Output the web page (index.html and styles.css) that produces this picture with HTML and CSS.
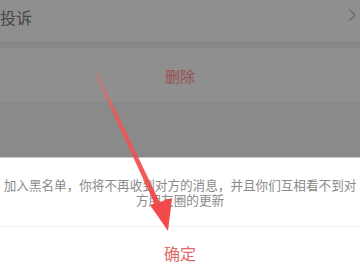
FILE: index.html
```html
<!DOCTYPE html>
<html lang="zh">
<head>
<meta charset="utf-8">
<link rel="stylesheet" href="styles.css">
</head>
<body>
<div class="page">
  <div class="row row-complaint">
    <span class="label">投诉</span>
    <svg class="chev" width="8" height="14" viewBox="0 0 8 14"><path d="M1 1 L7 7 L1 13" fill="none" stroke="#6a6a6a" stroke-width="1.3"/></svg>
  </div>
  <div class="band"></div>
  <div class="row row-delete">删除</div>
  <div class="dim"></div>
  <div class="dialog">
    <div class="message">加入黑名单，你将不再收到对方的消息，并且你们互相看不到对方朋友圈的更新</div>
    <div class="confirm">确定</div>
  </div>
  <svg class="arrow" width="360" height="270" viewBox="0 0 360 270">
    <defs>
      <linearGradient id="g" x1="96" y1="72" x2="160" y2="215" gradientUnits="userSpaceOnUse">
        <stop offset="0" stop-color="#f06a6a" stop-opacity="0.3"/>
        <stop offset="0.3" stop-color="#f05656" stop-opacity="0.85"/>
        <stop offset="1" stop-color="#f24a4a"/>
      </linearGradient>
    </defs>
    <polygon points="94,72 97,71 162,207 157,209" fill="url(#g)"/>
    <polygon points="150,205 172,198 168,231" fill="#f24a4a"/>
  </svg>
</div>
</body>
</html>
```
FILE: styles.css
```css
html, body {
  margin: 0;
  padding: 0;
}
body {
  width: 360px;
  height: 270px;
  overflow: hidden;
  font-family: "Noto Sans CJK SC", "Noto Sans", sans-serif;
}
.page {
  position: relative;
  width: 360px;
  height: 270px;
  display: flex;
  flex-direction: column;
  background: #8e8e8e;
}
.row {
  display: flex;
  align-items: center;
}
.row-complaint {
  height: 41px;
  background: #8f8f8f;
  justify-content: space-between;
  padding: 0 4px 0 0;
}
.row-complaint .label {
  font-size: 16px;
  color: #474747;
  margin-top: -8px;
}
.chev {
  margin-top: -12px;
}
.band {
  height: 7px;
  background: #878787;
}
.row-delete {
  height: 54px;
  background: #8f8f8f;
  justify-content: center;
  font-size: 15px;
  color: #9c4f4f;
  border-bottom: 1px solid #878787;
}
.dim {
  height: 54px;
  background: #8a8a8a;
  border-bottom: 1px solid #c8c8c8;
}
.dialog {
  flex: 1;
  background: #ffffff;
  display: flex;
  flex-direction: column;
}
.message {
  height: 69px;
  box-sizing: border-box;
  padding: 20px 0 0 0;
  font-size: 12.6px;
  line-height: 14.5px;
  color: #8a8a8a;
  text-align: center;
  border-bottom: 1px solid #f0f0f0;
}
.confirm {
  flex: 1;
  display: flex;
  align-items: center;
  justify-content: center;
  font-size: 16px;
  color: #e06a6a;
  padding-top: 8px;
}
.arrow {
  position: absolute;
  left: 0;
  top: 0;
}
```
